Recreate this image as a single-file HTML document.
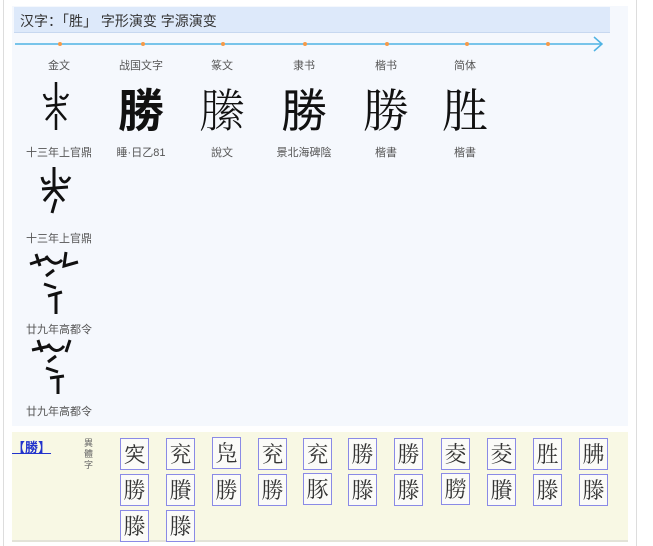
<!DOCTYPE html>
<html><head><meta charset="utf-8"><style>
body{margin:0;width:653px;height:546px;background:#fff;position:relative;overflow:hidden;font-family:"Liberation Sans","Noto Sans CJK SC",sans-serif}
.a{position:absolute}
.lb{position:absolute;font-size:11px;color:#555;text-align:center;width:80px}
.big{position:absolute;font-size:46px;color:#111;text-align:center;width:80px;line-height:50px}
.box{position:absolute;width:27px;height:30px;border:1px solid #8a8ae6;background:#fbfbf8;font-family:"Noto Serif CJK SC",serif;font-size:22px;line-height:30px;text-align:center;color:#333}
</style></head><body>
<div class="a" style="left:3px;top:0;width:1px;height:546px;background:#ddd"></div>
<div class="a" style="left:636px;top:0;width:1px;height:546px;background:#ddd"></div>
<div class="a" style="left:12px;top:6px;width:616px;height:420px;background:#f5f8fd"></div>
<div class="a" style="left:14px;top:7px;width:596px;height:25px;background:#dde9fa;border-bottom:1px solid #c7d8f0"></div>
<div class="a" style="left:20px;top:11px;font-size:14px;color:#333">汉字：「胜」 字形演变 字源演变</div>
<svg class="a" style="left:0;top:34px" width="653" height="22">
<line x1="15" y1="10" x2="602" y2="10" stroke="#4fb3e3" stroke-width="1.5"/>
<polyline points="594,3 602,10 594,17" fill="none" stroke="#4fb3e3" stroke-width="1.5"/>
<g fill="#f59a4a"><circle cx="60" cy="10" r="2"/><circle cx="143" cy="10" r="2"/><circle cx="223" cy="10" r="2"/><circle cx="305" cy="10" r="2"/><circle cx="387" cy="10" r="2"/><circle cx="467" cy="10" r="2"/><circle cx="548" cy="10" r="2"/></g>
</svg>
<div class="lb" style="left:19px;top:57px">金文</div>
<div class="lb" style="left:101px;top:57px">战国文字</div>
<div class="lb" style="left:182px;top:57px">篆文</div>
<div class="lb" style="left:264px;top:57px">隶书</div>
<div class="lb" style="left:346px;top:57px">楷书</div>
<div class="lb" style="left:425px;top:57px">简体</div>
<svg class="a" style="left:38px;top:80px" width="40" height="56" fill="none" stroke="#111" stroke-width="2.5">
<path d="M18 2 V30 M6 14 Q8 22 14 18 M22 16 Q26 22 30 14 M8 26 L28 24 M18 28 L8 40 M18 28 L28 40 M18 34 V50"/></svg>
<div class="big" style="left:101px;top:83px;font-weight:bold;font-family:'Noto Sans CJK SC',sans-serif">勝</div>
<div class="big" style="left:182px;top:83px;font-family:'Noto Serif CJK SC',serif;font-weight:200">縢</div>
<div class="big" style="left:264px;top:83px;font-family:'Noto Sans CJK SC',sans-serif">勝</div>
<div class="big" style="left:346px;top:83px;font-family:'Noto Serif CJK SC',serif">勝</div>
<div class="big" style="left:425px;top:83px;font-family:'Noto Serif CJK SC',serif">胜</div>
<div class="lb" style="left:19px;top:144px">十三年上官鼎</div>
<div class="lb" style="left:101px;top:144px">睡·日乙81</div>
<div class="lb" style="left:182px;top:144px">說文</div>
<div class="lb" style="left:264px;top:144px">景北海碑陰</div>
<div class="lb" style="left:346px;top:144px">楷書</div>
<div class="lb" style="left:425px;top:144px">楷書</div>
<svg class="a" style="left:36px;top:165px" width="44" height="56" fill="none" stroke="#111" stroke-width="3">
<path d="M18 2 V22 M6 12 Q8 22 14 16 M24 12 Q28 22 34 12 M6 24 L32 22 M18 24 L8 36 M18 24 L28 36 M20 34 L16 48"/></svg>
<div class="lb" style="left:19px;top:230px">十三年上官鼎</div>
<svg class="a" style="left:26px;top:248px" width="62" height="70" fill="none" stroke="#111" stroke-width="3">
<path d="M4 16 L22 10 M10 6 L14 18 M20 8 Q28 20 36 12 M40 4 L38 18 L52 14 M20 28 L28 22 M18 36 L30 40 M22 48 L36 44 M30 46 V66"/></svg>
<div class="lb" style="left:19px;top:321px">廿九年高都令</div>
<svg class="a" style="left:28px;top:336px" width="62" height="60" fill="none" stroke="#111" stroke-width="3">
<path d="M4 14 L22 10 M10 4 L14 16 M20 8 Q28 20 36 10 M42 4 L38 16 M20 26 L28 20 M18 32 L30 36 M22 42 L36 40 M30 42 V58"/></svg>
<div class="lb" style="left:19px;top:403px">廿九年高都令</div>
<div class="a" style="left:12px;top:432px;width:616px;height:108px;background:#f8f8e4;border-bottom:2px solid #e3e3d8"></div>
<div class="a" style="left:12px;top:437px;font-size:13px;font-weight:bold;color:#2233cc;text-decoration:underline">【勝】</div>
<div class="a" style="left:84px;top:438px;width:10px;font-size:9px;line-height:11px;color:#666">異體字</div>
<div class="box" style="left:120px;top:438px">𥤮</div>
<div class="box" style="left:166px;top:438px">兖</div>
<div class="box" style="left:212px;top:437px">凫</div>
<div class="box" style="left:258px;top:438px">兖</div>
<div class="box" style="left:303px;top:438px">兖</div>
<div class="box" style="left:348px;top:438px">勝</div>
<div class="box" style="left:394px;top:438px">勝</div>
<div class="box" style="left:441px;top:438px">夌</div>
<div class="box" style="left:487px;top:438px">夌</div>
<div class="box" style="left:533px;top:438px">胜</div>
<div class="box" style="left:579px;top:438px">胇</div>
<div class="box" style="left:120px;top:474px">勝</div>
<div class="box" style="left:166px;top:474px">賸</div>
<div class="box" style="left:212px;top:474px">勝</div>
<div class="box" style="left:258px;top:474px">勝</div>
<div class="box" style="left:303px;top:473px">豚</div>
<div class="box" style="left:348px;top:474px">滕</div>
<div class="box" style="left:394px;top:474px">滕</div>
<div class="box" style="left:441px;top:473px">朥</div>
<div class="box" style="left:487px;top:474px">賸</div>
<div class="box" style="left:533px;top:474px">滕</div>
<div class="box" style="left:579px;top:474px">滕</div>
<div class="box" style="left:120px;top:510px">滕</div>
<div class="box" style="left:166px;top:510px">滕</div>
</body></html>
